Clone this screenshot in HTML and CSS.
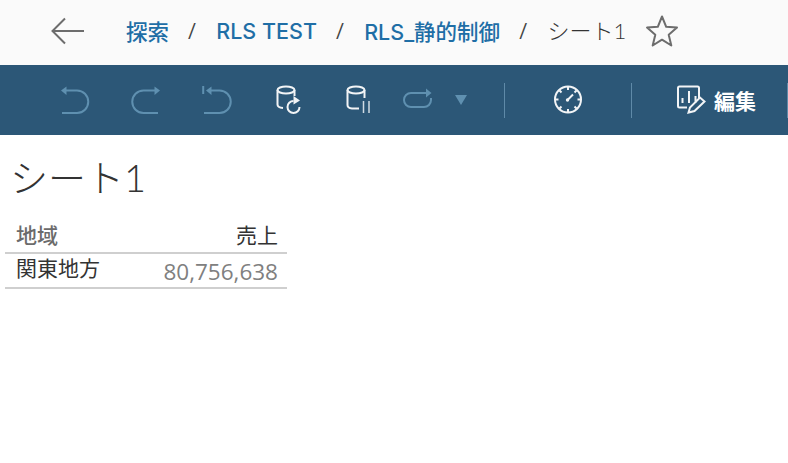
FILE: index.html
```html
<!DOCTYPE html>
<html lang="ja">
<head>
  <meta charset="UTF-8">
  <title>シート 1</title>
  <link rel="stylesheet" href="styles.css">
</head>
<body>

<!-- Breadcrumb -->
<div class="topbar">
  <svg class="back" width="34" height="28" viewBox="0 0 34 28"><path d="M33 14H2M14 1.500 1.500 14 14 26.500"/></svg>
  <a class="crumb">探索</a>
  <span class="slash">/</span>
  <a class="crumb">RLS TEST</a>
  <span class="slash">/</span>
  <a class="crumb">RLS_静的制御</a>
  <span class="slash">/</span>
  <span class="current">シート1</span>
  <svg class="star" width="34" height="34" viewBox="0 0 34 34"><path d="M17 2.500 21.200 12.800 32 13.600 23.700 20.700 26.300 31.500 17 25.700 7.700 31.500 10.300 20.700 2 13.600 12.800 12.800Z"/></svg>
</div>

<!-- Toolbar -->
<div class="toolbar">
  <div class="tool"><svg class="dim" width="30" height="30" viewBox="0 0 30 30"><path d="M4 5.500H17A11.250 11.250 0 0 1 17 28H2"/><path class="fill" d="M1 5.500 6.500 1.500V10Z"/></svg></div>
  <div class="tool"><svg class="dim" width="30" height="30" viewBox="0 0 30 30"><path d="M25 5.500H12.500A11.250 11.250 0 0 0 12.500 28H27"/><path class="fill" d="M29 5.500 23.500 1.500V10Z"/></svg></div>
  <div class="tool"><svg class="dim" width="30" height="30" viewBox="0 0 30 30"><path d="M1.200 1V9M6 5.500H17.500A11.250 11.250 0 0 1 17.500 28H2"/><path class="fill" d="M4 5.500 9.500 1.500V10Z"/></svg></div>
  <div class="tool"><svg class="bright" width="26" height="32" viewBox="0 0 26 32"><ellipse cx="11" cy="6" rx="8.500" ry="3.500"/><path d="M2.500 6V20.500Q2.500 23.500 8 24M19.500 6V12"/><path d="M24.500 23A6 6 0 1 1 18.500 17"/><path class="solid" d="M18.500 12 25 16.500 18.500 20.500Z"/></svg></div>
  <div class="tool"><svg class="bright" width="26" height="32" viewBox="0 0 26 32"><ellipse cx="10" cy="6" rx="8.500" ry="3.500"/><path d="M1.500 6V21Q1.500 24 6 24.500H13M18.500 6V14"/><path class="thin" d="M17.500 17V29M23 17V29"/></svg></div>
  <div class="loop">
    <svg class="dim" width="30" height="24" viewBox="0 0 30 24"><path d="M24 5H8A7 7 0 0 0 8 19H21A7 7 0 0 0 28 12V10"/><path class="fill" d="M28.500 5 23 .5V9.500Z"/></svg>
    <span class="caret"></span>
  </div>
  <span class="sep"></span>
  <div class="tool wide"><svg class="bright" width="30" height="30" viewBox="0 0 30 30"><circle cx="15" cy="14.500" r="13"/><path d="M15 1.500V5M15 24V27.500M2 14.500H5.500M24.500 14.500H28M6.500 5.500 8.500 7.500M23.500 5.500 21.500 7.500M6.500 23.500 8.500 21.500M23.500 23.500 21.500 21.500M14.500 15 20 9.500"/><circle class="solid" cx="14.500" cy="15" r="1.700"/></svg></div>
  <span class="sep"></span>
  <div class="edit">
    <svg class="bright" width="30" height="30" viewBox="0 0 30 30"><path d="M10 22.500H2.500Q1 22.500 1 21V3Q1 1.500 2.500 1.500H20.500Q22 1.500 22 3V13"/><path d="M5.500 18V13M12 18V6M18.500 18V11M11.500 27.500 13 22.500 23 12.500 27.500 16.500 17.500 26Z"/></svg>
    <span>編集</span>
  </div>
  <span class="sep last"></span>
</div>

<!-- Sheet -->
<div class="sheet">
  <h1>シート1</h1>
  <div class="crosstab">
    <div class="cell head left">地域</div>
    <div class="cell head right">売上</div>
    <div class="cell left">関東地方</div>
    <div class="cell right num">80,756,638</div>
  </div>
</div>

</body>
</html>
```

FILE: styles.css
```css
body {
  margin: 0;
  height: 463px;
  overflow: hidden;
  background: #fff;
  font-family: Roboto, "Noto Sans CJK JP", sans-serif;
  color: #333;
}
.topbar {
  display: flex;
  align-items: center;
  height: 65px;
  padding: 0 0 4px 51px;
  box-sizing: border-box;
  background: #fafafa;
  font-size: 21.500px;
}
.back {
  margin-right: 41px;
  fill: none;
  stroke: #6d6d6d;
  stroke-width: 2;
}
.crumb {
  color: #1f6ea6;
  font-family: Inter, "Noto Sans CJK JP", sans-serif;
  font-weight: 500;
}
.slash {
  margin: 0 20px 0 19px;
  color: #444;
  font-size: 20px;
}
.current {
  margin: 0 0 3px 0;
  color: #333;
  font-family: Lato, "Noto Sans CJK JP", sans-serif;
  font-size: 22px;
  font-weight: 300;
}
.star {
  margin-left: 19px;
  fill: none;
  stroke: #6d6d6d;
  stroke-width: 2;
  stroke-linejoin: round;
}
.toolbar {
  display: flex;
  align-items: center;
  height: 70px;
  padding-left: 39px;
  background: #2c5777;
}
.tool {
  display: flex;
  justify-content: center;
  width: 71px;
  flex: none;
}
.tool.wide {
  width: 126px;
}
.dim {
  fill: none;
  stroke: #5f90b0;
  stroke-width: 2;
}
.dim .fill {
  fill: #5f90b0;
  stroke: none;
}
.bright {
  fill: none;
  stroke: #f2f4f6;
  stroke-width: 2;
}
.bright .solid {
  fill: #f2f4f6;
  stroke: none;
}
.bright .thin {
  stroke: #d0dbe4;
  stroke-width: 1.500;
}
.loop {
  display: flex;
  align-items: center;
  flex: none;
  width: 110px;
  box-sizing: border-box;
  padding-left: 9px;
}
.caret {
  margin-left: 22px;
  border: 6.500px solid transparent;
  border-top: 10px solid #5f90b0;
  border-bottom: 0;
}
.sep {
  flex: none;
  width: 1px;
  height: 35px;
  background: #5f8aa8;
}
.edit {
  display: flex;
  align-items: center;
  gap: 7px;
  flex: none;
  width: 155px;
  box-sizing: border-box;
  padding-left: 45px;
  color: #fff;
  font-size: 21px;
  font-weight: 700;
}
.sheet {
  padding: 18px 0 0 5px;
}
h1 {
  margin: 0 0 21px 5px;
  font-family: Lato, "Noto Sans CJK JP", sans-serif;
  font-size: 38px;
  font-weight: 300;
  line-height: 48px;
}
.crosstab {
  display: grid;
  grid-template-columns: 140px 142px;
  width: 282px;
}
.cell {
  border-bottom: 2px solid #cfcfcf;
  font-size: 21px;
  line-height: 30px;
}
.head {
  height: 30px;
  line-height: 28px;
}
.left {
  padding-left: 11px;
}
.right {
  padding-right: 9px;
  text-align: right;
}
.head.left {
  color: #6b6b6b;
  font-weight: 500;
}
.num {
  font-family: "Open Sans", sans-serif;
  color: #808080;
  font-size: 22.500px;
  line-height: 36px;
}
.cell:not(.head) {
  height: 33px;
}
```
